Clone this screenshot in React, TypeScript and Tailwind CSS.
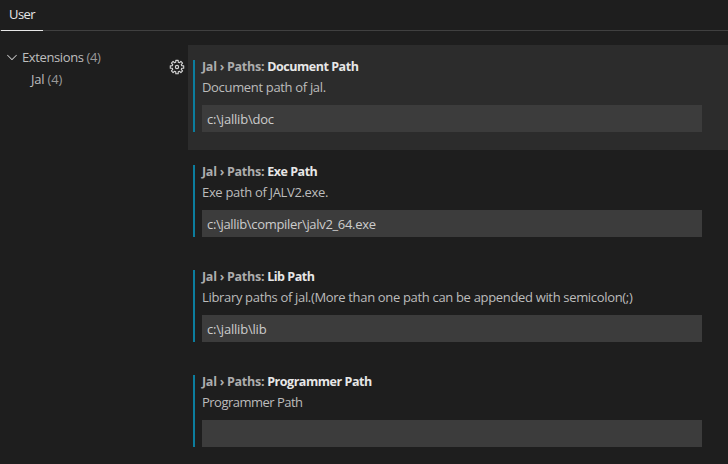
import { VscChevronDown } from "react-icons/vsc";

type Setting = {
  label: string;
  description: string;
  value: string;
  focused?: boolean;
  descriptionClass?: string;
  valueClass?: string;
};

const settings: Setting[] = [
  {
    label: "Document Path",
    description: "Document path of jal.",
    value: "c:\\jallib\\doc",
    valueClass: "tracking-[-0.2px]",
    focused: true,
  },
  { label: "Exe Path", description: "Exe path of JALV2.exe.", value: "c:\\jallib\\compiler\\jalv2_64.exe" },
  {
    label: "Lib Path",
    description: "Library paths of jal.(More than one path can be appended with semicolon(;)",
    value: "c:\\jallib\\lib",
    valueClass: "tracking-[-0.2px]",
  },
  {
    label: "Programmer Path",
    description: "Programmer Path",
    descriptionClass: "tracking-[-0.52px]",
    value: "",
  },
];

// Outline of a gear with eight rounded teeth, centred on (8, 8).
const gearOutline =
  Array.from({ length: 8 }, (_, tooth) =>
    [
      [-15, 4.9],
      [-10, 6.8],
      [10, 6.8],
      [15, 4.9],
    ]
      .map(([offset, radius]) => {
        const angle = ((tooth * 45 + offset) * Math.PI) / 180;
        return `${(8 + radius * Math.cos(angle)).toFixed(2)} ${(8 + radius * Math.sin(angle)).toFixed(2)}`;
      })
      .join("L"),
  )
    .map((points, index) => (index === 0 ? "M" : "L") + points)
    .join("") + "Z";

function GearIcon({ className }: { className?: string }) {
  return (
    <svg className={className} viewBox="0 0 16 16" fill="none" stroke="currentColor" strokeLinejoin="round">
      <path d={gearOutline} strokeWidth="1.15" />
      <circle cx="8" cy="8" r="1.6" strokeWidth="1.2" />
    </svg>
  );
}

function SettingRow({
  label,
  description,
  value,
  focused,
  descriptionClass = "tracking-[-0.33px]",
  valueClass = "tracking-[-0.32px]",
}: Setting) {
  return (
    <section className="flex h-[105px] shrink-0">
      <div className="flex w-[23px] shrink-0 pt-[14px] pl-[4px]">
        {focused && <GearIcon className="size-4 text-[#d4d4d4]" />}
      </div>
      <div className={`flex grow pt-[15px] pl-[5px] ${focused ? "bg-[#2c2c2c]" : ""}`}>
        <div className="h-[72px] w-[509px] border-l-2 border-[#0c7d9d] pl-[7px]">
          <h2 className="h-[18px] -translate-y-[2px] text-[12.5px] leading-[18px] font-bold tracking-[-0.46px] whitespace-pre text-[#e7e7e7]">
            <span className="tracking-[-0.27px] text-[#adadad]">Jal › Paths: </span>
            <span>{label}</span>
          </h2>
          <p className={`h-[27px] text-[13px] leading-[18px] whitespace-nowrap text-[#bcbcbc] ${descriptionClass}`}>
            {description}
          </p>
          <div
            className={`h-[27px] w-[500px] bg-[#3c3c3c] pt-px pl-[5px] text-[13px] leading-[27px] whitespace-nowrap text-[#cccccc] ${valueClass}`}
          >
            {value}
          </div>
        </div>
      </div>
    </section>
  );
}

export default function App() {
  return (
    <div className="flex h-[464px] w-[728px] flex-col overflow-hidden bg-[#1e1e1e] font-['Open_Sans','Noto_Sans',sans-serif] text-[13px] text-[#cccccc]">
      <header className="flex h-[31px] shrink-0 border-b border-[#404040] pl-px">
        <div className="-mb-px w-[42px] border-b border-[#e7e7e7] pt-[5px] pl-[8px] leading-[18px] tracking-[-0.55px] text-[#e7e7e7]">
          User
        </div>
      </header>
      <div className="flex grow pt-[14px]">
        <nav className="w-[165px] shrink-0 pt-px leading-[22px] text-[#bfbfbf]">
          <div className="flex h-[22px] items-center">
            <VscChevronDown className="ml-[4px] size-4 text-[#cccccc]" />
            <span className="ml-[2px] tracking-[-0.38px]">
              Extensions <span className="text-[#999999]">(4)</span>
            </span>
          </div>
          <div className="h-[22px] pl-[31px] tracking-[-0.2px]">
            Jal <span className="text-[#999999]">(4)</span>
          </div>
        </nav>
        <main className="flex h-[419px] grow flex-col overflow-hidden">
          {settings.map((setting) => (
            <SettingRow key={setting.label} {...setting} />
          ))}
        </main>
      </div>
    </div>
  );
}
